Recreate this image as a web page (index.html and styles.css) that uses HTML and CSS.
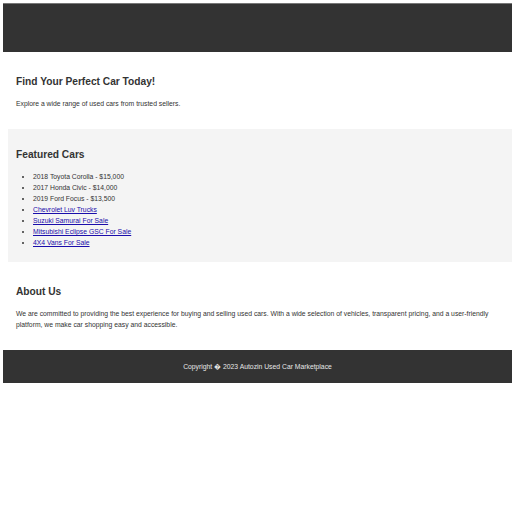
FILE: index.html
```html
<!DOCTYPE html>
<html>
<head>
<meta charset="utf-8">
<link rel="stylesheet" href="styles.css">
</head>
<body>
<header class="top"></header>
<main class="main">
  <section class="hero">
    <h2 class="title">Find Your Perfect Car Today!</h2>
    <p class="text">Explore a wide range of used cars from trusted sellers.</p>
  </section>
  <section class="featured">
    <h2 class="title">Featured Cars</h2>
    <ul class="cars">
      <li>2018 Toyota Corolla - $15,000</li>
      <li>2017 Honda Civic - $14,000</li>
      <li>2019 Ford Focus - $13,500</li>
      <li><a href="#">Chevrolet Luv Trucks</a></li>
      <li><a href="#">Suzuki Samurai For Sale</a></li>
      <li><a href="#">Mitsubishi Eclipse GSC For Sale</a></li>
      <li><a href="#">4X4 Vans For Sale</a></li>
    </ul>
  </section>
  <section class="about">
    <h2 class="title">About Us</h2>
    <p class="text">We are committed to providing the best experience for buying and selling used cars. With a wide selection of vehicles, transparent pricing, and a user-friendly platform, we make car shopping easy and accessible.</p>
  </section>
</main>
<footer class="foot">Copyright &#xFFFD; 2023 Autozin Used Car Marketplace</footer>
</body>
</html>
```
FILE: styles.css
```css
html, body {
  margin: 0;
  padding: 0;
  background: #fff;
}
body {
  padding: 3px 0 0 3px;
  font-family: "Liberation Sans", Arial, sans-serif;
  font-size: 6.8px;
  line-height: 11px;
  color: #333;
}
.top {
  height: 48px;
  background: #333;
  border-top: 1px solid #777;
}
.main {
  padding: 0 0 0 5px;
}
.hero {
  padding: 23px 8px 20px;
}
.featured {
  padding: 19px 8px 14px;
  background: #f4f4f4;
}
.about {
  padding: 23px 8px 20px;
}
.title {
  margin: 0 0 10px 0;
  font-size: 10.2px;
  font-weight: bold;
  line-height: 13px;
  color: #333;
}
.text {
  margin: 0;
}
.cars {
  margin: 0;
  padding-left: 17px;
}
.cars li {
  line-height: 11px;
}
.cars a {
  color: #1a0dab;
}
.foot {
  height: 33px;
  background: #333;
  color: #e6e6e6;
  text-align: center;
  line-height: 33px;
}
```
